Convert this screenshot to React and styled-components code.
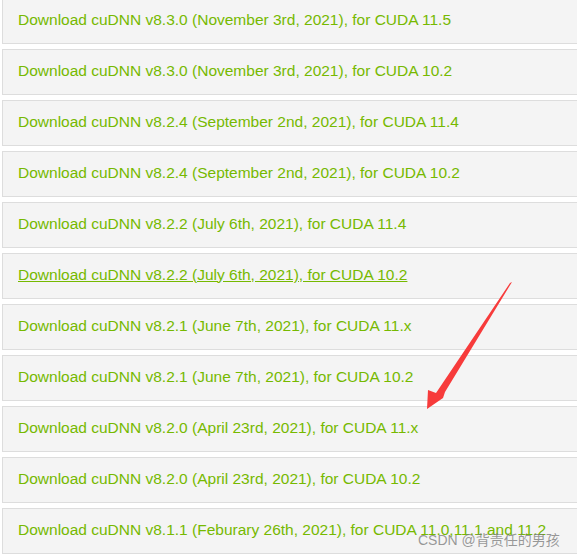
import * as React from 'react';
import styled, { createGlobalStyle } from 'styled-components';

const Global = createGlobalStyle`
  html, body {
    margin: 0;
    padding: 0;
    background: #ffffff;
    overflow: hidden;
  }
`;

const Page = styled.div`
  position: relative;
  width: 577px;
  height: 556px;
  overflow: hidden;
`;

const List = styled.div`
  display: flex;
  flex-direction: column;
  gap: 5px;
  margin-top: -2px;
  padding-left: 2px;
`;

const Row = styled.div`
  box-sizing: border-box;
  height: 46px;
  width: 590px;
  background: #f4f4f4;
  border: 1px solid #dddddd;
  display: flex;
  align-items: center;
  padding-left: 15px;
  padding-bottom: 3px;
`;

const Link = styled.a`
  font-family: "Liberation Sans", Arial, sans-serif;
  font-size: 15.5px;
  color: #76b900;
  text-decoration: ${(p) => (p.$hover ? 'underline' : 'none')};
  white-space: nowrap;
`;

const Watermark = styled.div`
  position: absolute;
  left: 418px;
  top: 529px;
  font-family: "Liberation Sans", "Noto Sans CJK SC", sans-serif;
  font-size: 14px;
  color: rgba(120, 120, 120, 0.75);
  white-space: nowrap;
`;

const Arrow = styled.svg`
  position: absolute;
  left: 0;
  top: 0;
  pointer-events: none;
`;

const rows = [
  'Download cuDNN v8.3.0 (November 3rd, 2021), for CUDA 11.5',
  'Download cuDNN v8.3.0 (November 3rd, 2021), for CUDA 10.2',
  'Download cuDNN v8.2.4 (September 2nd, 2021), for CUDA 11.4',
  'Download cuDNN v8.2.4 (September 2nd, 2021), for CUDA 10.2',
  'Download cuDNN v8.2.2 (July 6th, 2021), for CUDA 11.4',
  'Download cuDNN v8.2.2 (July 6th, 2021), for CUDA 10.2',
  'Download cuDNN v8.2.1 (June 7th, 2021), for CUDA 11.x',
  'Download cuDNN v8.2.1 (June 7th, 2021), for CUDA 10.2',
  'Download cuDNN v8.2.0 (April 23rd, 2021), for CUDA 11.x',
  'Download cuDNN v8.2.0 (April 23rd, 2021), for CUDA 10.2',
  'Download cuDNN v8.1.1 (Feburary 26th, 2021), for CUDA 11.0,11.1 and 11.2',
];

export default function App() {
  return (
    <Page>
      <Global />
      <List>
        {rows.map((t, i) => (
          <Row key={i}>
            <Link $hover={i === 5}>{t}</Link>
          </Row>
        ))}
      </List>
      <Arrow width="577" height="556" viewBox="0 0 577 556">
        <polygon
          points="512,282 445,392 443,398 427,409 428,390 436,393 510,283"
          fill="#f73b3b"
        />
      </Arrow>
      <Watermark>CSDN @背责任的男孩</Watermark>
    </Page>
  );
}
